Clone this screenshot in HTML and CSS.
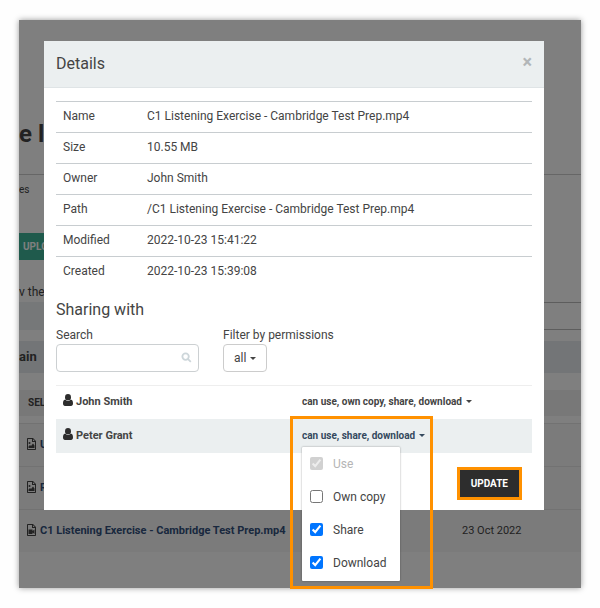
FILE: index.html
```html
<!DOCTYPE html>
<html lang="en">
<head>
  <meta charset="UTF-8">
  <meta name="viewport" content="width=device-width, initial-scale=1.0">
  <title>Details</title>
  <link rel="stylesheet" href="styles.css">
</head>
<body>
  <svg width="0" height="0" class="sprite" aria-hidden="true">
    <symbol id="icon-user" viewBox="0 0 20 24">
      <ellipse cx="10" cy="6.500" rx="6" ry="6.500"/>
      <path d="M4.500 11C1 11.600 0 15 0 19c0 3 1.500 5 4 5h12c2.500 0 4-2 4-5 0-4-1-7.400-4.500-8-1.300 1.800-3.300 3-5.500 3s-4.200-1.200-5.500-3z"/>
    </symbol>
    <symbol id="icon-image" viewBox="0 0 18 24">
      <path fill-rule="evenodd" d="M1.500 0H12l6 6v16.500c0 .8-.7 1.500-1.500 1.500h-15C.7 24 0 23.300 0 22.500v-21C0 .7.700 0 1.500 0zM2 2v20h14V8h-6V2zm10 .5V6h3.500z"/>
      <path d="M3 20v-3l3-3 2 2 4-5 3 4v5z"/>
      <circle cx="5" cy="10" r="2"/>
    </symbol>
    <symbol id="icon-video" viewBox="0 0 18 24">
      <path fill-rule="evenodd" d="M1.500 0H12l6 6v16.500c0 .8-.7 1.500-1.500 1.500h-15C.7 24 0 23.300 0 22.500v-21C0 .7.700 0 1.500 0zM2 2v20h14V8h-6V2zm10 .5V6h3.500z"/>
      <path d="M3 11h8v3l4-3v9l-4-3v3H3z"/>
    </symbol>
  </svg>

  <div class="screen">
    <main class="page">
      <h1>e l</h1>
      <div class="page-tabs">es</div>
      <button class="upload-button">UPLO</button>
      <p class="page-note">v the</p>
      <div class="page-filter"><span class="filter-label"></span><span class="filter-box"></span></div>
      <h2 class="folder">ain</h2>
      <table class="files">
        <thead>
          <tr><th colspan="2">SEL</th></tr>
        </thead>
        <tbody>
          <tr class="spacer"><td colspan="2"></td></tr>
          <tr><td><svg class="file-icon"><use href="#icon-image"/></svg><a href="#">U</a></td><td></td></tr>
          <tr><td><svg class="file-icon"><use href="#icon-image"/></svg><a href="#">R</a></td><td></td></tr>
          <tr><td><svg class="file-icon"><use href="#icon-video"/></svg><a href="#">C1 Listening Exercise - Cambridge Test Prep.mp4</a></td><td class="date">23 Oct 2022</td></tr>
        </tbody>
      </table>
    </main>

    <div class="backdrop">
      <div class="modal" role="dialog" aria-labelledby="modal-title">
        <div class="modal-header">
          <h2 id="modal-title">Details</h2>
          <button class="close" aria-label="Close">×</button>
        </div>
        <div class="modal-body">
          <table class="details">
            <tbody>
              <tr><th>Name</th><td>C1 Listening Exercise - Cambridge Test Prep.mp4</td></tr>
              <tr><th>Size</th><td>10.55 MB</td></tr>
              <tr><th>Owner</th><td>John Smith</td></tr>
              <tr><th>Path</th><td>/C1 Listening Exercise - Cambridge Test Prep.mp4</td></tr>
              <tr><th>Modified</th><td>2022-10-23 15:41:22</td></tr>
              <tr><th>Created</th><td>2022-10-23 15:39:08</td></tr>
            </tbody>
          </table>

          <h3>Sharing with</h3>
          <div class="filters">
            <div class="field">
              <label for="search">Search</label>
              <div class="search-box">
                <input type="text" id="search">
                <svg viewBox="0 0 12 12" class="search-icon"><circle cx="5" cy="5" r="3.500"/><path d="M7.700 7.700l3 3"/></svg>
              </div>
            </div>
            <div class="field">
              <label for="filter">Filter by permissions</label>
              <button id="filter" class="filter-button">all <span class="caret"></span></button>
            </div>
          </div>

          <table class="shares">
            <tbody>
              <tr>
                <td><svg class="user-icon"><use href="#icon-user"/></svg>John Smith</td>
                <td><button class="perm">can use, own copy, share, download <span class="caret"></span></button></td>
              </tr>
              <tr class="active">
                <td><svg class="user-icon"><use href="#icon-user"/></svg>Peter Grant</td>
                <td>
                  <div class="dropdown">
                    <button class="perm">can use, share, download <span class="caret"></span></button>
                    <div class="menu">
                      <label class="disabled"><input type="checkbox" checked disabled>Use</label>
                      <label><input type="checkbox">Own copy</label>
                      <label><input type="checkbox" checked>Share</label>
                      <label><input type="checkbox" checked>Download</label>
                    </div>
                    <div class="highlight"></div>
                  </div>
                </td>
              </tr>
            </tbody>
          </table>

          <div class="modal-actions">
            <button class="update-button">UPDATE</button>
          </div>
        </div>
      </div>
    </div>
  </div>
</body>
</html>
```
FILE: styles.css
```css
* {
  box-sizing: border-box;
}
body {
  margin: 0;
  padding: 20px 19px;
  background-color: #fefefe;
  color: #444;
  font-family: Roboto, sans-serif;
  font-size: 12px;
  line-height: 16px;
}
h1, h2, h3, p {
  margin: 0;
}
button, input {
  font-family: inherit;
}
table {
  width: 100%;
  border-collapse: collapse;
}
td, th {
  padding: 0;
  text-align: left;
}
.sprite {
  position: absolute;
}
.screen {
  position: relative;
  box-shadow: 0 0 6px rgba(0, 0, 0, 0.4);
}

/* page under the dialog */
.page {
  background-color: #fff;
  padding: 100px 0 36px;
  overflow: hidden;
}
.page h1 {
  height: 54px;
  font-size: 24px;
  line-height: 28px;
}
.page-tabs {
  height: 59px;
  padding-top: 7px;
  border-top: 1px solid #ccc;
  font-size: 10px;
}
.upload-button {
  display: block;
  height: 27px;
  padding: 0 4px;
  border: none;
  background-color: #3fb498;
  color: #fff;
  font-size: 10px;
  font-weight: bold;
}
.page-note {
  height: 42px;
  padding-top: 24px;
}
.page-filter {
  display: flex;
  height: 28px;
}
.filter-label {
  width: 100px;
  background-color: #ecf0f2;
}
.filter-box {
  flex: 1;
  border: 1px solid #bbb;
  border-right: none;
}
.folder {
  margin: 11px 0 17px;
  background-color: #e6ebee;
  font-size: 13px;
  line-height: 32px;
}
.files {
  font-size: 11px;
}
.files th {
  height: 26px;
  padding-left: 9px;
  background-color: #f0f0f0;
  font-size: 10px;
}
.files td {
  height: 43px;
  border-top: 1px solid #e4e4e4;
  background-color: #f7f7f7;
}
.files .spacer td {
  height: 7px;
  border: none;
  background: none;
}
.files td:first-child {
  padding-left: 8px;
}
.files .date {
  width: 119px;
}
.files a {
  color: #33507c;
  font-weight: bold;
  text-decoration: none;
}
.file-icon {
  width: 9px;
  height: 12px;
  margin-right: 4px;
  fill: #444;
  vertical-align: -2px;
}

/* dialog */
.backdrop {
  position: absolute;
  inset: 0;
  padding: 21px 37px 0 25px;
  background-color: rgba(0, 0, 0, 0.5);
}
.modal {
  background-color: #fff;
}
.modal-header {
  display: flex;
  justify-content: space-between;
  align-items: center;
  height: 47px;
  padding: 0 12px;
  border-bottom: 1px solid #dfe4e6;
  background-color: #ebeff0;
}
.modal-header h2 {
  font-size: 16px;
  font-weight: normal;
}
.close {
  height: 28px;
  padding: 0 0 4px;
  border: none;
  background: none;
  color: #b2b6b8;
  font-size: 18px;
  font-weight: bold;
  line-height: 20px;
}
.modal-body {
  padding: 13px 12px 10px;
}
.details th, .details td {
  height: 31px;
  padding-bottom: 2px;
  border-top: 1px solid #c8cdd0;
}
.details th {
  width: 91px;
  padding-left: 7px;
  font-weight: normal;
}
.modal h3 {
  margin-top: 12px;
  font-size: 16px;
  font-weight: normal;
  line-height: 20px;
}
.filters {
  display: flex;
  gap: 24px;
  margin-top: 7px;
}
.field {
  display: flex;
  flex-direction: column;
  align-items: flex-start;
  gap: 1px;
}
.search-box {
  position: relative;
}
.search-box input {
  display: block;
  width: 143px;
  height: 28px;
  padding: 0 24px 0 8px;
  border: 1px solid #ccd0d2;
  border-radius: 4px;
}
.search-icon {
  position: absolute;
  top: 8px;
  right: 7px;
  width: 11px;
  height: 11px;
  fill: none;
  stroke: #cdd6da;
  stroke-width: 2;
}
.filter-button {
  height: 28px;
  padding: 0 10px;
  border: 1px solid #ccc;
  border-radius: 4px;
  background-color: #fff;
  color: #444;
  font-size: 12px;
}
.caret {
  display: inline-block;
  margin-left: 1px;
  border: 3px solid transparent;
  border-top-color: currentColor;
  border-bottom: none;
  vertical-align: 2px;
}
.shares {
  margin-top: 13px;
  border-top: 1px solid #eee;
  font-size: 11px;
  font-weight: bold;
}
.shares td {
  height: 34px;
}
.shares td:first-child {
  width: 246px;
  padding-left: 7px;
}
.shares .active td {
  background-color: #ebeff0;
}
.user-icon {
  width: 10px;
  height: 12px;
  margin-right: 3px;
  fill: #2d2d2d;
  vertical-align: -1px;
}
.perm {
  display: block;
  padding: 0;
  border: none;
  background: none;
  color: #444;
  font-size: 10px;
  font-weight: bold;
  line-height: 16px;
}
.active .perm {
  color: #34495e;
}
.dropdown {
  position: relative;
}
.menu {
  position: absolute;
  top: 19px;
  left: 0;
  width: 98px;
  padding: 0 8px 2px;
  border-radius: 1px;
  background-color: #fff;
  box-shadow: 0 0 2px rgba(0, 0, 0, 0.4);
  font-size: 12px;
  font-weight: normal;
}
.menu label {
  display: flex;
  align-items: center;
  gap: 10px;
  height: 33px;
  white-space: nowrap;
}
.menu input {
  margin: 0;
}
.menu .disabled {
  color: #b5b5b5;
}
.highlight {
  position: absolute;
  top: -12px;
  left: -12px;
  width: 143px;
  height: 173px;
  border: 3px solid #ff9100;
  pointer-events: none;
}
.modal-actions {
  display: flex;
  justify-content: flex-end;
  padding: 14px 10px 0;
}
.update-button {
  height: 33px;
  padding: 0 11px;
  border: 3px solid #ff9100;
  background-color: #2d2d2d;
  color: #fff;
  font-size: 10px;
  font-weight: bold;
}
```
